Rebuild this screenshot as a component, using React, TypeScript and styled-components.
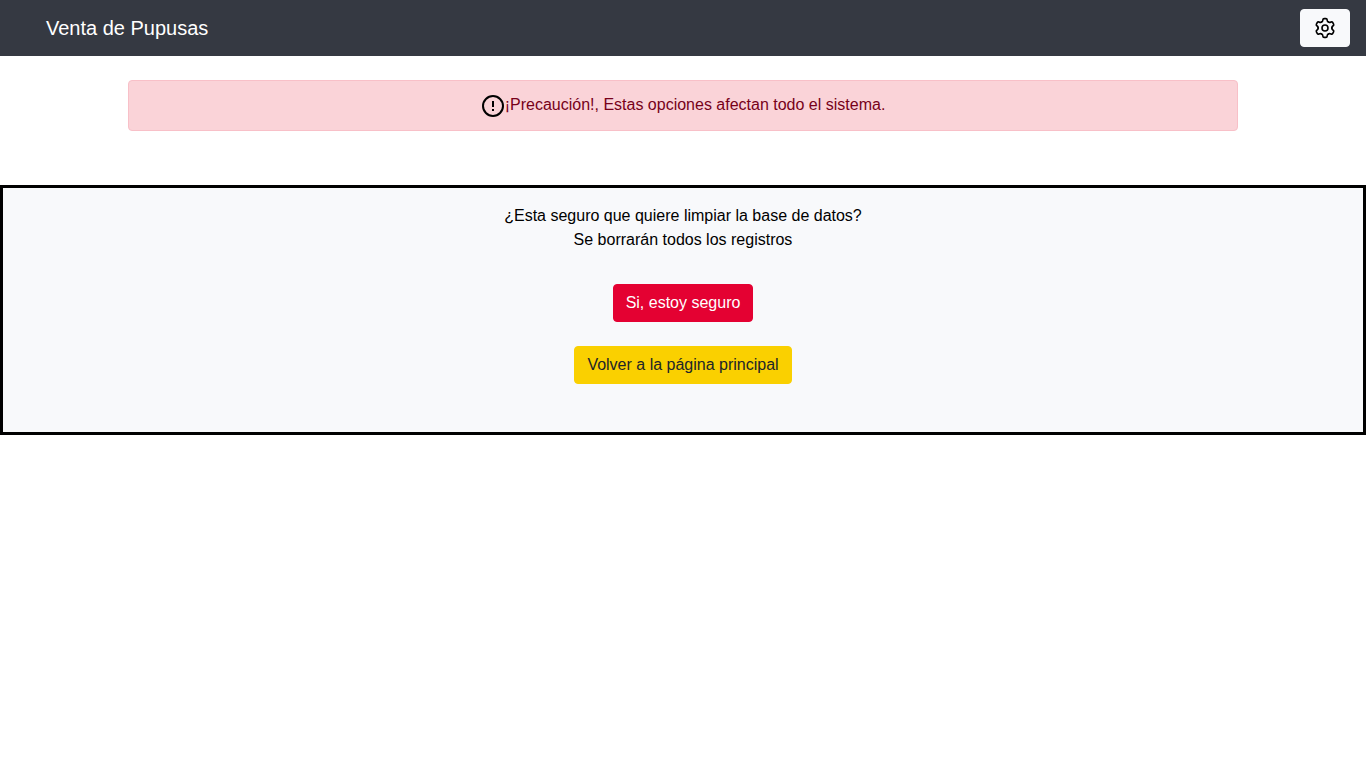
import React from "react";
import styled, { createGlobalStyle } from "styled-components";

const GlobalStyle = createGlobalStyle`
  *, *::before, *::after { box-sizing: border-box; }
  body {
    margin: 0;
    background: #fff;
    color: #000;
    font-family: "Liberation Sans", Arial, sans-serif;
    font-size: 16px;
    line-height: 24px;
  }
`;

const Navbar = styled.nav`
  display: flex;
  align-items: center;
  justify-content: space-between;
  min-height: 56px;
  padding: 8px 16px;
  background: #353942;
`;

const Brand = styled.a`
  padding: 0 30px;
  color: #fff;
  font-size: 20px;
  line-height: 30px;
  text-decoration: none;
`;

const variants = {
  light: { background: "#f8f9fb", color: "#000" },
  danger: { background: "#e40132", color: "#fff" },
  warning: { background: "#fad000", color: "#212529" },
};

const Button = styled.button<{ $variant: keyof typeof variants }>`
  display: inline-flex;
  align-items: center;
  justify-content: center;
  height: 38px;
  padding: 0 12px;
  border: 1px solid ${(p) => variants[p.$variant].background};
  border-radius: 4px;
  background: ${(p) => variants[p.$variant].background};
  color: ${(p) => variants[p.$variant].color};
  font: inherit;
  cursor: pointer;
`;

const Container = styled.div`
  max-width: 1140px;
  margin: 24px auto 54px;
  padding: 0 15px;
`;

const Alert = styled.div`
  padding: 12px 20px;
  border: 1px solid #f8c0c8;
  border-radius: 4px;
  background: #fad3d8;
  color: #77011a;
  text-align: center;
`;

const Icon = styled.svg`
  width: 24px;
  height: 24px;
  color: #000;
  vertical-align: middle;
`;

const Panel = styled.main`
  display: flex;
  flex-direction: column;
  align-items: center;
  gap: 24px;
  padding: 16px 16px 48px;
  border: 3px solid #000;
  background: #f8f9fb;
`;

const Question = styled.p`
  margin: 0 0 8px;
  text-align: center;
`;

// One tooth of the gear, from valley to valley; repeated every 60 degrees.
const TOOTH =
  "M-3.55-6.15C-2.9-5.77-2.25-6.6-2.15-8.2Q-2.05-9.4-.9-9.4H.9Q2.05-9.4 2.15-8.2C2.25-6.6 2.9-5.77 3.55-6.15";

function GearIcon() {
  return (
    <Icon viewBox="-12 -12 24 24" fill="none" stroke="currentColor" strokeWidth="1.6" strokeLinecap="round" aria-hidden="true">
      {[0, 60, 120, 180, 240, 300].map((angle) => (
        <path key={angle} d={TOOTH} transform={`rotate(${angle})`} />
      ))}
      <circle r="3" />
    </Icon>
  );
}

function WarningIcon() {
  return (
    <Icon viewBox="0 0 24 24" aria-hidden="true">
      <circle cx="12" cy="12" r="10" fill="none" stroke="currentColor" strokeWidth="2" />
      <path d="M11 7h2v6h-2zM11 15h2v2h-2z" fill="currentColor" />
    </Icon>
  );
}

export default function App() {
  return (
    <>
      <GlobalStyle />
      <Navbar>
        <Brand href="#">Venta de Pupusas</Brand>
        <Button $variant="light" type="button" aria-label="Opciones">
          <GearIcon />
        </Button>
      </Navbar>
      <Container>
        <Alert role="alert">
          <WarningIcon />
          ¡Precaución!, Estas opciones afectan todo el sistema.
        </Alert>
      </Container>
      <Panel>
        <Question>
          ¿Esta seguro que quiere limpiar la base de datos?
          <br />
          Se borrarán todos los registros
        </Question>
        <Button $variant="danger" type="button">Si, estoy seguro</Button>
        <Button $variant="warning" type="button">Volver a la página principal</Button>
      </Panel>
    </>
  );
}
